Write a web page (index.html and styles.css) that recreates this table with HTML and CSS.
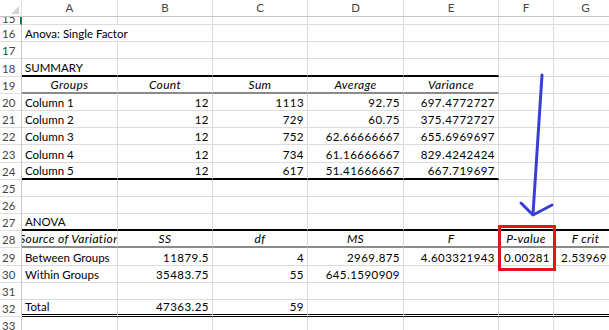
FILE: index.html
```html
<!DOCTYPE html>
<html>
<head>
<meta charset="utf-8">
<link rel="stylesheet" href="styles.css">
</head>
<body>
<div class="sheet">
  <div class="r hdr">
    <div class="c corner"><span class="tri"></span></div>
    <div class="c ch">A</div><div class="c ch">B</div><div class="c ch">C</div><div class="c ch">D</div><div class="c ch">E</div><div class="c ch">F</div><div class="c ch">G</div>
  </div>
  <div class="r sliver">
    <div class="c rn act">15</div>
    <div class="c"></div><div class="c"></div><div class="c"></div><div class="c"></div><div class="c"></div><div class="c"></div><div class="c"></div>
  </div>
  <div class="r">
    <div class="c rn">16</div>
    <div class="c t s2">Anova: Single Factor</div><div class="c"></div><div class="c"></div><div class="c"></div><div class="c"></div><div class="c"></div>
  </div>
  <div class="r">
    <div class="c rn">17</div>
    <div class="c"></div><div class="c"></div><div class="c"></div><div class="c"></div><div class="c"></div><div class="c"></div><div class="c"></div>
  </div>
  <div class="r">
    <div class="c rn">18</div>
    <div class="c t bk">SUMMARY</div><div class="c bk"></div><div class="c bk"></div><div class="c bk"></div><div class="c bk"></div><div class="c"></div><div class="c"></div>
  </div>
  <div class="r">
    <div class="c rn">19</div>
    <div class="c h bg"><span>Groups</span></div><div class="c h bg"><span>Count</span></div><div class="c h bg"><span>Sum</span></div><div class="c h bg"><span>Average</span></div><div class="c h bg"><span>Variance</span></div><div class="c"></div><div class="c"></div>
  </div>
  <div class="r">
    <div class="c rn">20</div>
    <div class="c t">Column 1</div><div class="c n">12</div><div class="c n">1113</div><div class="c n">92.75</div><div class="c n">697.4772727</div><div class="c"></div><div class="c"></div>
  </div>
  <div class="r">
    <div class="c rn">21</div>
    <div class="c t">Column 2</div><div class="c n">12</div><div class="c n">729</div><div class="c n">60.75</div><div class="c n">375.4772727</div><div class="c"></div><div class="c"></div>
  </div>
  <div class="r">
    <div class="c rn">22</div>
    <div class="c t">Column 3</div><div class="c n">12</div><div class="c n">752</div><div class="c n">62.66666667</div><div class="c n">655.6969697</div><div class="c"></div><div class="c"></div>
  </div>
  <div class="r">
    <div class="c rn">23</div>
    <div class="c t">Column 4</div><div class="c n">12</div><div class="c n">734</div><div class="c n">61.16666667</div><div class="c n">829.4242424</div><div class="c"></div><div class="c"></div>
  </div>
  <div class="r">
    <div class="c rn">24</div>
    <div class="c t bk">Column 5</div><div class="c n bk">12</div><div class="c n bk">617</div><div class="c n bk">51.41666667</div><div class="c n bk">667.719697</div><div class="c"></div><div class="c"></div>
  </div>
  <div class="r">
    <div class="c rn">25</div>
    <div class="c"></div><div class="c"></div><div class="c"></div><div class="c"></div><div class="c"></div><div class="c"></div><div class="c"></div>
  </div>
  <div class="r">
    <div class="c rn">26</div>
    <div class="c"></div><div class="c"></div><div class="c"></div><div class="c"></div><div class="c"></div><div class="c"></div><div class="c"></div>
  </div>
  <div class="r">
    <div class="c rn">27</div>
    <div class="c t bk">ANOVA</div><div class="c bk"></div><div class="c bk"></div><div class="c bk"></div><div class="c bk"></div><div class="c bk"></div><div class="c bk"></div>
  </div>
  <div class="r">
    <div class="c rn">28</div>
    <div class="c h bg"><span>Source of Variation</span></div><div class="c h bg"><span>SS</span></div><div class="c h bg"><span>df</span></div><div class="c h bg"><span>MS</span></div><div class="c h bg"><span>F</span></div><div class="c h bg"><span>P-value</span></div><div class="c h bg"><span>F crit</span></div>
  </div>
  <div class="r">
    <div class="c rn">29</div>
    <div class="c t">Between Groups</div><div class="c n">11879.5</div><div class="c n">4</div><div class="c n">2969.875</div><div class="c n">4.603321943</div><div class="c n">0.00281</div><div class="c n gcol">2.53969</div>
  </div>
  <div class="r">
    <div class="c rn">30</div>
    <div class="c t">Within Groups</div><div class="c n">35483.75</div><div class="c n">55</div><div class="c n">645.1590909</div><div class="c"></div><div class="c"></div><div class="c"></div>
  </div>
  <div class="r">
    <div class="c rn">31</div>
    <div class="c"></div><div class="c"></div><div class="c"></div><div class="c"></div><div class="c"></div><div class="c"></div><div class="c"></div>
  </div>
  <div class="r">
    <div class="c rn">32</div>
    <div class="c t bd">Total</div><div class="c n bd">47363.25</div><div class="c n bd">59</div><div class="c bd"></div><div class="c bd"></div><div class="c bd"></div><div class="c bd"></div>
  </div>
  <div class="r">
    <div class="c rn">33</div>
    <div class="c"></div><div class="c"></div><div class="c"></div><div class="c"></div><div class="c"></div><div class="c"></div><div class="c"></div>
  </div>

  <svg class="annot" width="609" height="330" viewBox="0 0 609 330">
    <path d="M542 75 Q538 140 533 214" fill="none" stroke="#3a3fd3" stroke-width="3" stroke-linecap="round"/>
    <path d="M521 203 L533 215 L552 205" fill="none" stroke="#3a3fd3" stroke-width="3" stroke-linecap="round" stroke-linejoin="round"/>
    <rect x="499.5" y="226.5" width="55" height="43" fill="none" stroke="#e3141c" stroke-width="3"/>
  </svg>
</div>
</body>
</html>
```
FILE: styles.css
```css
html, body {
  margin: 0;
  padding: 0;
  background: #fff;
}
body {
  width: 609px;
  height: 330px;
  overflow: hidden;
}
.sheet {
  position: relative;
  width: 609px;
  height: 330px;
  overflow: hidden;
  font-family: Lato, "Liberation Sans", sans-serif;
  font-size: 11.5px;
  color: #000;
}
.r {
  display: grid;
  grid-template-columns: 22px 96px 95px 95px 96px 95px 55px 64px;
  height: 17.2px;
}
.c {
  box-sizing: border-box;
  border-right: 1px solid #dcdcdc;
  border-bottom: 1px solid #dcdcdc;
  overflow: hidden;
  white-space: nowrap;
  display: flex;
  align-items: flex-end;
  padding-bottom: 0;
  line-height: 14px;
}
.hdr {
  height: 17px;
}
.hdr .c {
  border-bottom: 1px solid #c4c4c4;
  border-right: 1px solid #dedede;
  justify-content: center;
  align-items: center;
  color: #444;
}
.corner {
  position: relative;
}
.tri {
  position: absolute;
  right: 2px;
  bottom: 2px;
  width: 0;
  height: 0;
  border-left: 8px solid transparent;
  border-bottom: 8px solid #d4d4d4;
}
.sliver {
  height: 8px;
}
.sliver .c {
  align-items: flex-start;
}
.sliver .rn {
  line-height: 4px;
}
.rn {
  color: #444;
  border-right: 1px solid #c6c6c6;
  padding-left: 2px;
  border-bottom: 1px solid #dedede;
}
.act {
  border-right: 2px solid #217346;
}
.t {
  padding-left: 3px;
}
.s2 {
  grid-column: span 2;
}
.n {
  justify-content: flex-end;
  padding-right: 3px;
  letter-spacing: 0.45px;
}
.gcol {
  padding-right: 10px;
}
.h {
  justify-content: center;
  font-style: italic;
  font-size: 12px;
  letter-spacing: 0.35px;
}
.h span {
  flex: none;
}
.bk {
  border-bottom: 2px solid #000;
}
.bg {
  border-bottom: 2px solid #8a8a8a;
}
.bd {
  border-bottom: 3px double #000;
}
.annot {
  position: absolute;
  left: 0;
  top: 0;
  pointer-events: none;
}
```
